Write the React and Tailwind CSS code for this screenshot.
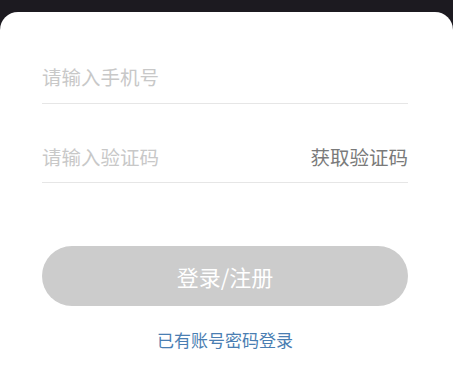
import React from 'react'

const font = { fontFamily: '"Noto Sans CJK SC", "Noto Sans", sans-serif' }

const App = () => {
  return (
    <div className="w-[453px] h-[380px] bg-[#1c1a20] pt-[12px] overflow-hidden" style={font}>
      <div className="h-full bg-white rounded-t-[18px] pl-[42px] pr-[45px]">
        {/* phone */}
        <div className="pt-[51px] pb-[12px] border-b border-[#e6e6e6]">
          <div className="h-[28px] leading-[28px] text-[19.5px] text-[#c8c8c8]">请输入手机号</div>
        </div>

        {/* code */}
        <div className="pt-[39px] pb-[11px] border-b border-[#e6e6e6] flex items-center justify-between">
          <div className="h-[28px] leading-[28px] text-[19.5px] text-[#c8c8c8]">请输入验证码</div>
          <div className="h-[28px] leading-[28px] text-[19.5px] text-[#7a7a7a]">获取验证码</div>
        </div>

        {/* submit */}
        <button className="mt-[63px] w-full h-[60px] rounded-full bg-[#cccccc] text-white text-[22px] flex items-center justify-center">
          登录/注册
        </button>

        <div className="mt-[22px] h-[24px] leading-[24px] text-center text-[17px] text-[#4a7eb2]">
          已有账号密码登录
        </div>
      </div>
    </div>
  )
}

export default App
